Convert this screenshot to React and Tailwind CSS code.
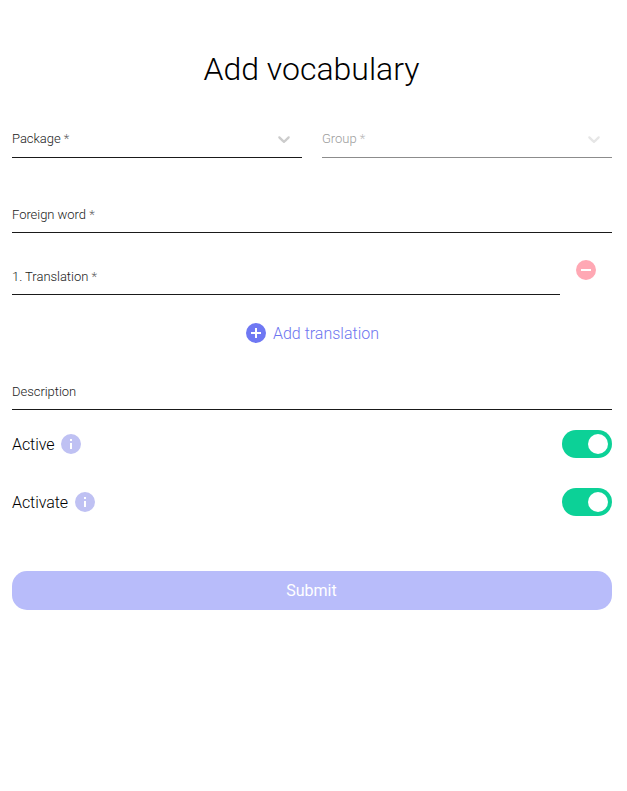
import React from 'react';

const Chevron = () => (
  <svg className="h-5 w-5" viewBox="0 0 20 20" fill="currentColor"><path d="M4.516 7.548c0.436-0.446 1.043-0.481 1.576 0l3.908 3.747 3.908-3.747c0.533-0.481 1.141-0.446 1.574 0 0.436 0.445 0.408 1.197 0 1.615-0.406 0.418-4.695 4.502-4.695 4.502-0.217 0.223-0.502 0.335-0.787 0.335s-0.57-0.112-0.789-0.335c0 0-4.287-4.084-4.695-4.502s-0.436-1.17 0-1.615z" /></svg>
);

const Info = () => (
  <svg className="h-6 w-6 shrink-0" viewBox="0 0 24 24" fill="#bfc1f3"><path d="M12 2a10 10 0 100 20 10 10 0 000-20zm1 15h-2v-6h2v6zm0-8h-2V7h2v2z" /></svg>
);

function Label({ children, required }) {
  return (
    <span className="text-[13px] leading-4 tracking-[-0.003em]">
      {children}
      {required && <span className="opacity-70"> *</span>}
    </span>
  );
}

function Toggle({ label, labelWidth }) {
  return (
    <div className="flex h-7 items-center justify-between">
      <div className="flex items-center">
        <span className={`pt-0.5 tracking-[-0.005em] ${labelWidth}`}>{label}</span>
        <Info />
      </div>
      <div className="flex h-7 w-[50px] items-center justify-end rounded-full bg-[#0cd197] pr-1">
        <div className="h-5 w-5 rounded-full bg-white" />
      </div>
    </div>
  );
}

export default function App() {
  return (
    <main className="h-[791px] bg-white pl-3 pr-[15px] pt-[45px] font-[Roboto,sans-serif] font-light text-black">
      <h1 className="h-12 pr-px text-center text-[32px] leading-[48px]">Add vocabulary</h1>
      <div className="mt-[27px] flex gap-5">
        <div className="flex h-[38px] flex-1 items-center justify-between border-b border-[#1a1a1a] pr-2 text-[#1a1a1a]">
          <Label required>Package</Label>
          <span className="text-[#cccccc]"><Chevron /></span>
        </div>
        <div className="flex h-[38px] flex-1 items-center justify-between border-b border-[#8c8c8c] pr-2 text-[#9c9c9c]">
          <Label required>Group</Label>
          <span className="text-[#e6e6e6]"><Chevron /></span>
        </div>
      </div>
      <div className="mt-[37px] flex h-[38px] items-center border-b border-[#1a1a1a] pt-0.5 text-[#1a1a1a]"><Label required>Foreign word</Label></div>
      <div className="mt-6 flex">
        <div className="flex h-[38px] w-[548px] items-center border-b border-[#1a1a1a] pt-0.5 text-[#1a1a1a]"><Label required>1. Translation</Label></div>
        <svg className="ml-[14px] mt-px h-6 w-6" viewBox="0 0 24 24" fill="#ffa8b4"><path d="M12 2a10 10 0 100 20 10 10 0 000-20zm5 11H7v-2h10v2z" /></svg>
      </div>
      <div className="mt-[26px] flex h-6 items-center justify-center gap-[5px] pr-px text-[#6d75f0]">
        <svg className="h-6 w-6" viewBox="0 0 24 24" fill="#6f78f3"><path d="M12 2a10 10 0 100 20 10 10 0 000-20zm5 11h-4v4h-2v-4H7v-2h4V7h2v4h4v2z" /></svg>
        <span className="pt-0.5">Add translation</span>
      </div>
      <div className="mt-[27px] flex h-[38px] items-center border-b border-[#1a1a1a] pt-0.5 text-[#1a1a1a]"><Label>Description</Label></div>
      <div className="mt-5 flex flex-col gap-[30px]">
        <Toggle label="Active" labelWidth="w-[47px]" />
        <Toggle label="Activate" labelWidth="w-[61px]" />
      </div>
      <button className="mt-[55px] h-[39px] w-full rounded-[15px] bg-[#b8bcfa] pr-px text-base font-normal text-white">Submit</button>
    </main>
  );
}
